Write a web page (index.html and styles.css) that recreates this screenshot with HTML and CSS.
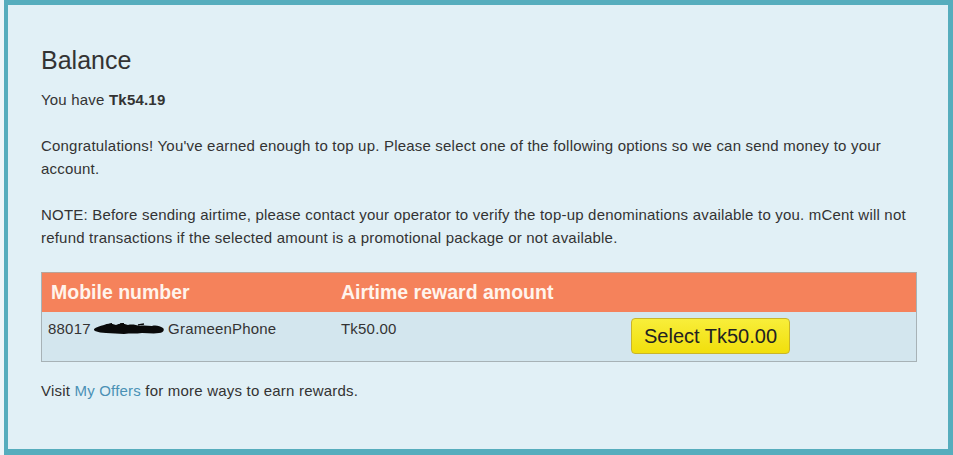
FILE: index.html
```html
<!DOCTYPE html>
<html>
<head>
<meta charset="utf-8">
<link rel="stylesheet" href="styles.css">
</head>
<body>
<div class="frame">
  <h1 class="title">Balance</h1>
  <p class="para">You have <strong>Tk54.19</strong></p>
  <p class="para">Congratulations! You've earned enough to top up. Please select one of the following options so we can send money to your account.</p>
  <p class="para">NOTE: Before sending airtime, please contact your operator to verify the top-up denominations available to you. mCent will not refund transactions if the selected amount is a promotional package or not available.</p>
  <div class="table">
    <div class="thead">
      <div class="th th-first">Mobile number</div>
      <div class="th">Airtime reward amount</div>
      <div class="th"></div>
    </div>
    <div class="trow">
      <div class="td td-first">88017<svg class="redact" width="70" height="12" viewBox="0 0 70 12"><path d="M0 6 C2 4 6 3 10 2 C14 0 18 1 22 2 C26 0 30 1 34 2 C38 1 42 2 46 3 C50 2 54 3 58 3 C62 2 66 3 69 5 C71 7 69 10 65 10 C60 11 54 10 48 10 C42 11 36 10 30 11 C24 11 18 10 12 10 C8 10 4 9 1 8 C0 7 0 7 0 6 Z" fill="#0a0a0a"/><path d="M14 2 L18 0.5 M26 1 L30 0.5 M44 2 L50 1" stroke="#0a0a0a" stroke-width="1.5" fill="none"/></svg> GrameenPhone</div>
      <div class="td td-amount">Tk50.00</div>
      <div class="td td-action"><button class="select-btn">Select Tk50.00</button></div>
    </div>
  </div>
  <p class="footer">Visit <a class="link" href="#">My Offers</a> for more ways to earn rewards.</p>
</div>
</body>
</html>
```
FILE: styles.css
```css
html, body {
  margin: 0;
  padding: 0;
}
body {
  background: #eef6f9;
  font-family: "Liberation Sans", Arial, sans-serif;
  color: #333333;
}
.frame {
  margin-left: 4px;
  border-top: 5px solid #56adbd;
  border-left: 4px solid #56adbd;
  border-right: 5px solid #56adbd;
  border-bottom: 6px solid #56adbd;
  background: #e1f0f6;
  padding: 40px 31px 0 33px;
  height: 404px;
}
.title {
  margin: 0;
  font-size: 25px;
  line-height: 30px;
  font-weight: normal;
  color: #333333;
}
.para {
  margin: 13px 0 23px;
  font-size: 15px;
  letter-spacing: 0.2px;
  line-height: 23px;
}
.para + .para {
  margin-top: 0;
}
.para strong {
  font-weight: bold;
}
.table {
  border: 1px solid #a7b2b6;
  border-top-color: #b9a49a;
}
.thead {
  display: grid;
  grid-template-columns: 289px 290px 1fr;
  background: #f5825b;
  height: 39px;
  align-items: center;
}
.th {
  color: #fff4ec;
  font-weight: bold;
  font-size: 19.5px;
  padding-left: 10px;
}
.th-first {
  padding-left: 9px;
}
.trow {
  display: grid;
  grid-template-columns: 289px 290px 1fr;
  background: #d3e6ee;
  height: 49px;
}
.td {
  font-size: 15px;
  letter-spacing: 0.2px;
  line-height: 18px;
  padding-top: 8px;
  padding-left: 10px;
}
.td-first {
  padding-left: 6px;
  display: flex;
  align-items: flex-start;
  white-space: pre;
}
.redact {
  margin-top: 3px;
  margin-left: 3px;
}
.td-action {
  padding-top: 6px;
}
.select-btn {
  font-family: "Liberation Sans", Arial, sans-serif;
  font-size: 20px;
  color: #222222;
  height: 36px;
  width: 159px;
  padding: 0;
  border: 1px solid #c9b52a;
  border-radius: 4px;
  background: linear-gradient(#f8ee3a, #f1df0c);
  text-align: center;
}
.footer {
  margin: 17px 0 0;
  font-size: 15px;
  letter-spacing: 0.2px;
  line-height: 23px;
}
.link {
  color: #4a91b5;
  text-decoration: none;
}
```
